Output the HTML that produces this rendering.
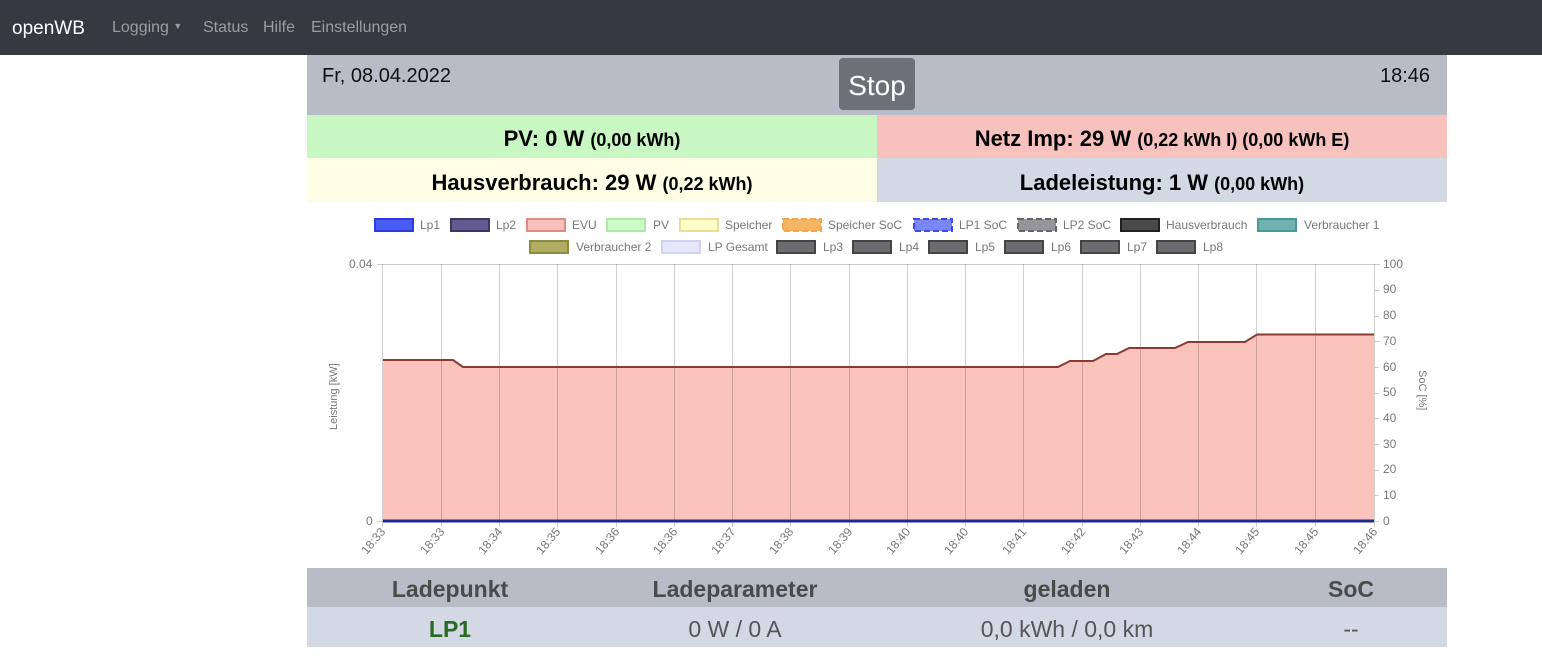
<!DOCTYPE html>
<html><head><meta charset="utf-8"><style>
*{margin:0;padding:0;box-sizing:border-box}
body{width:1542px;height:671px;background:#fff;font-family:"Liberation Sans","DejaVu Sans",sans-serif;position:relative;overflow:hidden}
.nav{position:absolute;left:0;top:0;width:1542px;height:55px;background:#343a40}
.nav span{position:absolute;top:19px;font-size:16px;color:#9a9da2}
.a{position:absolute}
.c{position:absolute;text-align:center;font-weight:bold;font-size:22px;color:#000}
.c small{font-size:18px}
</style></head><body>
<div class="nav">
<span style="left:12px;color:#fff;font-size:19px;top:18px">openWB</span>
<span style="left:112px">Logging <span style="position:relative;top:-3px;left:0;font-size:9px">&#9660;</span></span>
<span style="left:203px">Status</span>
<span style="left:263px">Hilfe</span>
<span style="left:311px">Einstellungen</span>
</div>
<div class="a" style="left:307px;top:55px;width:1140px;height:60px;background:#b8bcc7"></div>
<div class="a" style="left:322px;top:65px;font-size:20px;color:#111">Fr, 08.04.2022</div>
<div class="a" style="left:1380px;top:65px;font-size:20px;color:#111">18:46</div>
<div class="a" style="left:839px;top:58px;width:76px;height:52px;background:#6c7177;border-radius:4px;color:#fff;font-size:28px;text-align:center;line-height:56px">Stop</div>
<div class="c" style="left:307px;top:115px;width:570px;height:43px;background:#c9f7c3;line-height:48px">PV: 0 W <small>(0,00 kWh)</small></div>
<div class="c" style="left:877px;top:115px;width:570px;height:43px;background:#f7c2bd;line-height:48px">Netz Imp: 29 W <small>(0,22 kWh I) (0,00 kWh E)</small></div>
<div class="c" style="left:307px;top:158px;width:570px;height:44px;background:#fefee4;line-height:50px">Hausverbrauch: 29 W <small>(0,22 kWh)</small></div>
<div class="c" style="left:877px;top:158px;width:570px;height:44px;background:#d2d8e4;line-height:50px">Ladeleistung: 1 W <small>(0,00 kWh)</small></div>

<svg class="a" style="left:0;top:0" width="1542" height="671" font-family="Liberation Sans, sans-serif" font-size="12" fill="#777">
<g stroke-width="2">
<rect x="375" y="219" width="38" height="12" fill="#4a5cf7" stroke="#2a3cdc"/><text x="420" y="229" stroke="none">Lp1</text>
<rect x="451" y="219" width="38" height="12" fill="#655a8f" stroke="#3e3566"/><text x="496" y="229" stroke="none">Lp2</text>
<rect x="527" y="219" width="38" height="12" fill="#f9c1bb" stroke="#e08a80"/><text x="572" y="229" stroke="none">EVU</text>
<rect x="607" y="219" width="38" height="12" fill="#cdfcc8" stroke="#aee8a6"/><text x="653" y="229" stroke="none">PV</text>
<rect x="680" y="219" width="38" height="12" fill="#fdfdc8" stroke="#ecdc9a"/><text x="725" y="229" stroke="none">Speicher</text>
<rect x="783" y="219" width="38" height="12" fill="#f5b563" stroke="#f5a64a" stroke-dasharray="6 3"/><text x="828" y="229" stroke="none">Speicher SoC</text>
<rect x="914" y="219" width="38" height="12" fill="#7b86f7" stroke="#3a4cf0" stroke-dasharray="6 3"/><text x="959" y="229" stroke="none">LP1 SoC</text>
<rect x="1018" y="219" width="38" height="12" fill="#96959a" stroke="#666" stroke-dasharray="6 3"/><text x="1063" y="229" stroke="none">LP2 SoC</text>
<rect x="1121" y="219" width="38" height="12" fill="#4a4a4c" stroke="#222"/><text x="1166" y="229" stroke="none">Hausverbrauch</text>
<rect x="1258" y="219" width="38" height="12" fill="#6fb2b0" stroke="#4a9896"/><text x="1304" y="229" stroke="none">Verbraucher 1</text>
<rect x="530" y="241" width="38" height="12" fill="#b0ac62" stroke="#8e8a3e"/><text x="576" y="251" stroke="none">Verbraucher 2</text>
<rect x="662" y="241" width="38" height="12" fill="#e4e7fb" stroke="#d0d4ef"/><text x="708" y="251" stroke="none">LP Gesamt</text>
<g fill="#6c6c70" stroke="#444">
<rect x="777" y="241" width="38" height="12"/><rect x="853" y="241" width="38" height="12"/><rect x="929" y="241" width="38" height="12"/><rect x="1005" y="241" width="38" height="12"/><rect x="1081" y="241" width="38" height="12"/><rect x="1157" y="241" width="38" height="12"/>
</g>
<g stroke="none"><text x="823" y="251">Lp3</text><text x="899" y="251">Lp4</text><text x="975" y="251">Lp5</text><text x="1051" y="251">Lp6</text><text x="1127" y="251">Lp7</text><text x="1203" y="251">Lp8</text></g>
</g>
<path d="M383,521 L383,360 L453,360 L463,367 L1058,367 L1070,361 L1093,361 L1106,354 L1117,354 L1129,348 L1175,348 L1188,342 L1245,342 L1257,334.5 L1374,334.5 L1374,521 Z" fill="#f9c2bb"/>
<g stroke="#ccc" stroke-width="1">
<line x1="377" y1="264.5" x2="1374" y2="264.5"/>
<line x1="377" y1="521.5" x2="383" y2="521.5"/>
<line x1="1374" y1="264.5" x2="1380" y2="264.5"/>
</g>
<g stroke="#000" stroke-opacity="0.18" stroke-width="1">
<path d="M382.5,264V527M441.5,264V527M499.5,264V527M557.5,264V527M616.5,264V527M674.5,264V527M732.5,264V527M790.5,264V527M849.5,264V527M907.5,264V527M965.5,264V527M1023.5,264V527M1082.5,264V527M1140.5,264V527M1198.5,264V527M1256.5,264V527M1374.5,264V527M1315.5,264V527"/>
</g>
<path d="M383,360 L453,360 L463,367 L1058,367 L1070,361 L1093,361 L1106,354 L1117,354 L1129,348 L1175,348 L1188,342 L1245,342 L1257,334.5 L1374,334.5" fill="none" stroke="#8b3a32" stroke-width="2"/>
<line x1="383" y1="521" x2="1374" y2="521" stroke="#1d2a8f" stroke-width="3"/>
<text x="349" y="268">0.04</text><text x="366" y="525">0</text>
<g>
<text x="1383" y="268">100</text><text x="1383" y="293">90</text><text x="1383" y="319">80</text><text x="1383" y="345">70</text><text x="1383" y="371">60</text><text x="1383" y="396">50</text><text x="1383" y="422">40</text><text x="1383" y="448">30</text><text x="1383" y="473">20</text><text x="1383" y="499">10</text><text x="1383" y="525">0</text>
</g>
<g stroke="#ccc"><path d="M1374,290.5h5M1374,316.5h5M1374,341.5h5M1374,367.5h5M1374,393.5h5M1374,418.5h5M1374,444.5h5M1374,470.5h5M1374,495.5h5M1374,521.5h5"/></g>
<text transform="translate(337,430) rotate(-90)" font-size="11">Leistung [kW]</text>
<text transform="translate(1419,370) rotate(90)" font-size="11">SoC [%]</text>
<g font-size="12">
<text transform="translate(386,532) rotate(-50)" text-anchor="end">18:33</text>
<text transform="translate(445,532) rotate(-50)" text-anchor="end">18:33</text>
<text transform="translate(503,532) rotate(-50)" text-anchor="end">18:34</text>
<text transform="translate(561,532) rotate(-50)" text-anchor="end">18:35</text>
<text transform="translate(620,532) rotate(-50)" text-anchor="end">18:36</text>
<text transform="translate(678,532) rotate(-50)" text-anchor="end">18:36</text>
<text transform="translate(736,532) rotate(-50)" text-anchor="end">18:37</text>
<text transform="translate(794,532) rotate(-50)" text-anchor="end">18:38</text>
<text transform="translate(853,532) rotate(-50)" text-anchor="end">18:39</text>
<text transform="translate(911,532) rotate(-50)" text-anchor="end">18:40</text>
<text transform="translate(969,532) rotate(-50)" text-anchor="end">18:40</text>
<text transform="translate(1027,532) rotate(-50)" text-anchor="end">18:41</text>
<text transform="translate(1086,532) rotate(-50)" text-anchor="end">18:42</text>
<text transform="translate(1144,532) rotate(-50)" text-anchor="end">18:43</text>
<text transform="translate(1202,532) rotate(-50)" text-anchor="end">18:44</text>
<text transform="translate(1260,532) rotate(-50)" text-anchor="end">18:45</text>
<text transform="translate(1319,532) rotate(-50)" text-anchor="end">18:45</text>
<text transform="translate(1378,532) rotate(-50)" text-anchor="end">18:46</text>
</g>
</svg>

<div class="a" style="left:307px;top:568px;width:1140px;height:39px;background:#b8bcc7"></div>
<div class="a" style="left:307px;top:607px;width:1140px;height:40px;background:#d2d8e4"></div>
<div class="c" style="left:350px;top:576px;width:200px;color:#4a4a4a;font-size:23px">Ladepunkt</div>
<div class="c" style="left:585px;top:576px;width:300px;color:#4a4a4a;font-size:23px">Ladeparameter</div>
<div class="c" style="left:917px;top:576px;width:300px;color:#4a4a4a;font-size:23px">geladen</div>
<div class="c" style="left:1251px;top:576px;width:200px;color:#4a4a4a;font-size:23px">SoC</div>
<div class="c" style="left:350px;top:616px;width:200px;color:#2a6a22;font-size:23px">LP1</div>
<div class="c" style="left:585px;top:616px;width:300px;color:#555;font-weight:normal;font-size:23px">0 W / 0 A</div>
<div class="c" style="left:917px;top:616px;width:300px;color:#555;font-weight:normal;font-size:23px">0,0 kWh / 0,0 km</div>
<div class="c" style="left:1251px;top:616px;width:200px;color:#555;font-weight:normal;font-size:23px">--</div>
</body></html>
